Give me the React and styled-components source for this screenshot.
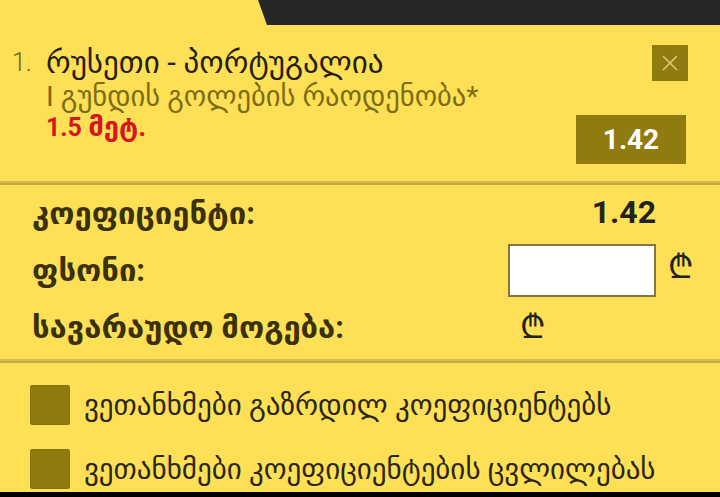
import styled, { createGlobalStyle } from "styled-components"

const GlobalStyle = createGlobalStyle`
html, body {
  margin:0;
  padding:0;
  background:#fee056;
}
body {
  font-family: Roboto, "Noto Sans", "DejaVu Sans", sans-serif;
}
`

const Page = styled.div`
width:720px;
height:497px;
overflow:hidden;
background:#fee056;
display:flex;
flex-direction:column;
`

const TopBar = styled.div`
height:25px;
display:flex;
justify-content:flex-end;
`
const Tab = styled.div`
width:462px;
background:#272727;
clip-path:polygon(0 0, 100% 0, 100% 100%, 9px 100%);
`

const Bet = styled.div`
height:156px;
box-sizing:border-box;
display:grid;
grid-template-columns:1fr auto;
padding:20px 32px 0 12px;
`
const BetInfo = styled.div`
display:flex;
`
const Num = styled.div`
width:34px;
font-size:25px;
font-weight:300;
color:#6b5f2a;
line-height:36px;
`
const Lines = styled.div`
display:flex;
flex-direction:column;
`
const Title = styled.div`
font-size:31px;
color:#262012;
line-height:36px;
white-space:nowrap;
`
const Market = styled.div`
font-size:28.5px;
color:#7d6c12;
line-height:32px;
white-space:nowrap;
`
const Pick = styled.div`
font-size:25px;
font-weight:700;
color:#d4161f;
line-height:28px;
`
const Geo = styled.span`
font-size:1.1em;
`
const Side = styled.div`
display:flex;
flex-direction:column;
align-items:flex-end;
gap:34px;
`
const Close = styled.button`
width:36px;
height:36px;
border:none;
padding:0;
background:#8f7b10;
display:flex;
align-items:center;
justify-content:center;
`
const OddsButton = styled.div`
width:110px;
height:49px;
margin-right:2px;
background:#8f7b10;
color:#fff;
font-size:28px;
font-weight:700;
display:flex;
align-items:center;
justify-content:center;
`

const Divider = styled.div`
height:4px;
background:linear-gradient(#d6bb47 0 50%, #c4aa45 50% 100%);
`

const Summary = styled.div`
height:174px;
box-sizing:border-box;
padding:0 27px 0 32px;
display:grid;
grid-template-columns:1fr 148px 37px;
grid-auto-rows:57px;
align-items:center;
`
const Label = styled.div`
font-size:31px;
font-weight:700;
color:#3a3108;
white-space:nowrap;
`
const Value = styled.div`
font-size:32px;
font-weight:700;
color:#222;
text-align:right;
margin-top:-3px;
`
const StakeInput = styled.input`
width:148px;
height:53px;
box-sizing:border-box;
border:2px solid #857640;
background:#fff;
outline:none;
`
const Lari = styled.span`
font-family:"DejaVu Sans", sans-serif;
font-size:33px;
font-weight:300;
line-height:30px;
color:#222;
justify-self:${p => (p.$end ? "end" : "start")};
padding-left:${p => (p.$inset ? "12px" : "0")};
align-self:start;
margin-top:${p => (p.$inset ? "13px" : "10px")};
`

const Options = styled.div`
flex:1;
display:flex;
flex-direction:column;
gap:24px;
padding:22px 0 0 30px;
`
const Option = styled.label`
display:flex;
align-items:center;
gap:14px;
font-size:29px;
color:#2b2610;
white-space:nowrap;
`
const Box = styled.span`
width:40px;
height:40px;
border-radius:3px;
background:#8f7b10;
box-shadow:inset 0 0 0 1px #86720c;
flex-shrink:0;
`

const Footer = styled.div`
height:5px;
background:#000;
`

const App = () => {
  return (
    <Page>
      <GlobalStyle />
      <TopBar>
        <Tab />
      </TopBar>
      <Bet>
        <BetInfo>
          <Num>1.</Num>
          <Lines>
            <Title>რუსეთი - პორტუგალია</Title>
            <Market>I გუნდის გოლების რაოდენობა*</Market>
            <Pick>1.5 <Geo>მეტ.</Geo></Pick>
          </Lines>
        </BetInfo>
        <Side>
          <Close>
            <svg width="18" height="18" viewBox="0 0 18 18">
              <path d="M2 2 L16 16 M16 2 L2 16" stroke="#dcc86e" strokeWidth="1.6" />
            </svg>
          </Close>
          <OddsButton>1.42</OddsButton>
        </Side>
      </Bet>
      <Divider />
      <Summary>
        <Label>კოეფიციენტი:</Label>
        <Value>1.42</Value>
        <span />
        <Label>ფსონი:</Label>
        <StakeInput />
        <Lari $end>₾</Lari>
        <Label>სავარაუდო მოგება:</Label>
        <Lari $inset>₾</Lari>
        <span />
      </Summary>
      <Divider />
      <Options>
        <Option><Box />ვეთანხმები გაზრდილ კოეფიციენტებს</Option>
        <Option><Box />ვეთანხმები კოეფიციენტების ცვლილებას</Option>
      </Options>
      <Footer />
    </Page>
  )
}

export default App
